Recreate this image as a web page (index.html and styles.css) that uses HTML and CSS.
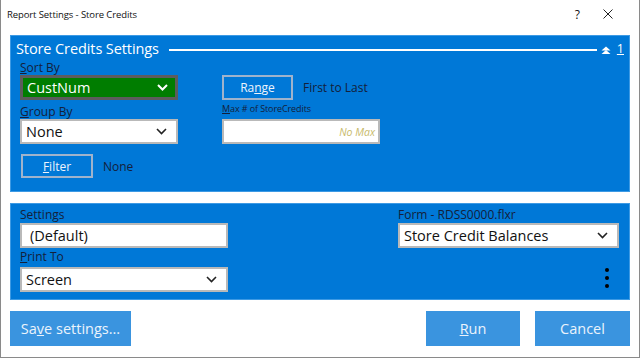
FILE: index.html
```html
<!DOCTYPE html>
<html lang="en">
<head>
    <meta charset="UTF-8">
    <meta name="viewport" content="width=device-width, initial-scale=1.0">
    <title>Report Settings - Store Credits</title>
    <link rel="stylesheet" href="styles.css">
</head>
<body>
    <div class="window">
        <div class="titlebar">
            <span class="title">Report Settings - Store Credits</span>
            <span class="help">?</span>
            <svg class="close" width="10" height="10" viewBox="0 0 10 10">
                <path d="M0.5 0.5 L9.5 9.5 M9.5 0.5 L0.5 9.5" stroke="#222" stroke-width="1"/>
            </svg>
        </div>
        <div class="content">
            <div class="panel top">
                <div class="panel-head">
                    <span class="panel-title">Store Credits Settings</span>
                    <span class="rule"></span>
                    <svg class="collapse" width="10" height="8" viewBox="0 0 10 8">
                        <polygon points="0.5,4.5 5,0.5 9.5,4.5" fill="#fff"/>
                        <polygon points="0.5,8 5,4 9.5,8" fill="#fff"/>
                    </svg>
                    <span class="page-num">1</span>
                </div>
                <div class="sort-grid">
                    <label class="lbl l-sort"><u>S</u>ort By</label>
                    <div class="select green s-sort">
                        <span>CustNum</span>
                        <svg width="11" height="7" viewBox="0 0 11 7"><polyline points="1,1 5.5,5.5 10,1" fill="none" stroke="#fff" stroke-width="2"/></svg>
                    </div>
                    <div class="range-row">
                        <button class="btn-outline range">Ra<u>n</u>ge</button>
                        <span class="plain">First to Last</span>
                    </div>
                    <label class="lbl l-group"><u>G</u>roup By</label>
                    <div class="select s-group">
                        <span>None</span>
                        <svg width="11" height="7" viewBox="0 0 11 7"><polyline points="1,1 5.5,5.5 10,1" fill="none" stroke="#222" stroke-width="1.6"/></svg>
                    </div>
                    <label class="lbl small l-max"><u>M</u>ax # of StoreCredits</label>
                    <div class="textbox max">No Max</div>
                    <div class="filter-row">
                        <button class="btn-outline filter"><u>F</u>ilter</button>
                        <span class="plain">None</span>
                    </div>
                </div>
            </div>

            <div class="panel bottom">
                <div class="col left">
                    <label class="lbl">Settings</label>
                    <div class="textbox setting">(Default)</div>
                    <label class="lbl"><u>P</u>rint To</label>
                    <div class="select wide">
                        <span>Screen</span>
                        <svg width="11" height="7" viewBox="0 0 11 7"><polyline points="1,1 5.5,5.5 10,1" fill="none" stroke="#222" stroke-width="1.6"/></svg>
                    </div>
                </div>
                <div class="col right">
                    <label class="lbl">Form - RDSS0000.flxr</label>
                    <div class="select form">
                        <span>Store Credit Balances</span>
                        <svg width="11" height="7" viewBox="0 0 11 7"><polyline points="1,1 5.5,5.5 10,1" fill="none" stroke="#222" stroke-width="1.6"/></svg>
                    </div>
                    <div class="kebab"><i></i><i></i><i></i></div>
                </div>
            </div>

            <div class="actions">
                <button class="btn save">Sa<u>v</u>e settings...</button>
                <span class="spacer"></span>
                <button class="btn run"><u>R</u>un</button>
                <button class="btn cancel">Cancel</button>
            </div>
        </div>
    </div>
</body>
</html>
```

FILE: styles.css
```css
* {
    box-sizing: border-box;
}
body {
    margin: 0;
    font-family: "Open Sans", "Noto Sans", sans-serif;
    background: #fff;
}
.window {
    width: 640px;
    height: 358px;
    border: 1px solid #8a8a8a;
    border-top: none;
    background: #fff;
    display: flex;
    flex-direction: column;
}
.titlebar {
    height: 30px;
    display: flex;
    align-items: center;
    padding: 0 0 2px 6px;
    font-size: 9.5px;
    color: #111;
}
.title {
    flex: 1;
    letter-spacing: -0.1px;
}
.help {
    font-size: 12px;
    margin-right: 23px;
}
.close {
    margin-right: 26px;
}
.content {
    padding: 5px 9px 0 9px;
}
.panel {
    background: #0078d7;
    border: 1px solid #3d9ae4;
}
.panel.top {
    height: 157px;
    padding: 0 9px 0 9px;
}
.panel-head {
    height: 24px;
    display: flex;
    align-items: center;
    color: #fff;
}
.panel-title {
    font-size: 14.5px;
    margin-left: -4px;
    letter-spacing: -0.1px;
}
.rule {
    flex: 1;
    height: 2px;
    background: #fff;
    margin: 4px 4px 0 10px;
}
.collapse {
    margin-top: 4px;
}
.page-num {
    font-size: 12.5px;
    text-decoration: underline;
    margin: 0 -4px 0 6px;
}
.lbl {
    display: block;
    font-size: 12px;
    color: #14203a;
    line-height: 14px;
}
.lbl.small {
    font-size: 9px;
    letter-spacing: -0.1px;
}
.sort-grid {
    display: grid;
    grid-template-columns: 158px 202px;
    grid-template-rows: 15px 25px 19px 25px 34px;
    column-gap: 44px;
    align-items: end;
}
.l-sort { grid-column: 1; grid-row: 1; }
.s-sort { grid-column: 1; grid-row: 2; }
.range-row { grid-column: 2; grid-row: 2; }
.l-group { grid-column: 1; grid-row: 3; }
.s-group { grid-column: 1; grid-row: 4; }
.l-max { grid-column: 2; grid-row: 3; margin-bottom: 3px; }
.max { grid-column: 2; grid-row: 4; width: 158px; }
.filter-row { grid-column: 1 / 3; grid-row: 5; }
.select, .textbox {
    height: 25px;
    border: 2px solid #b9b9b9;
    background: #fff;
    display: flex;
    align-items: center;
    justify-content: space-between;
    padding: 0 9px 0 4px;
    font-size: 14.5px;
    color: #111;
}
.select.green {
    background: #007d00;
    border: 3px solid #5c5c5c;
    color: #fff;
    padding-left: 4px;
    padding-right: 7px;
}
.textbox.max {
    justify-content: flex-end;
    font-size: 10.5px;
    font-style: italic;
    color: #c8ba6a;
    padding-right: 3px;
}
.range-row, .filter-row {
    display: flex;
    align-items: center;
    gap: 10px;
    height: 25px;
}
.filter-row {
    height: 24px;
}
.btn-outline {
    background: #0078d7;
    border: 2px solid #9fb3cc;
    color: #eef4fc;
    font-family: inherit;
    font-size: 12px;
    height: 24px;
    padding: 0;
}
.range {
    width: 71px;
    height: 25px;
}
.filter {
    width: 72px;
    margin-left: 1px;
}
.plain {
    font-size: 12px;
    color: #14203a;
}
.panel.bottom {
    margin-top: 11px;
    height: 97px;
    padding: 2px 9px 0 9px;
    display: flex;
    justify-content: space-between;
}
.col.left {
    width: 208px;
}
.col.right {
    width: 221px;
    margin-right: 1px;
}
.col .lbl {
    height: 17px;
    padding-top: 2px;
}
.col .select + .lbl,
.col .textbox + .lbl {
    height: 19px;
}
.textbox.setting {
    padding-left: 8px;
}
.kebab {
    display: flex;
    flex-direction: column;
    align-items: flex-end;
    gap: 4px;
    padding: 20px 10px 0 0;
}
.kebab i {
    width: 4px;
    height: 4px;
    border-radius: 50%;
    background: #000;
}
.actions {
    display: flex;
    margin-top: 11px;
    gap: 15px;
}
.spacer {
    flex: 1;
}
.btn {
    height: 35px;
    border: none;
    background: #3a94df;
    color: #eaf3fc;
    font-family: inherit;
    font-size: 14.5px;
    padding: 0;
}
.save {
    width: 121px;
}
.run {
    width: 94px;
}
.cancel {
    width: 95px;
}
```
